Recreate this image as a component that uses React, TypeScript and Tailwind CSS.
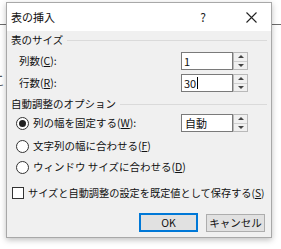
import React from "react";

const font = { fontFamily: '"Meiryo UI", "Noto Sans CJK JP", "Noto Sans", sans-serif' };

function Spinner() {
    return (
        <div className="w-[15px] h-full border border-[#b9b9b9] bg-[#f0f0f0] flex flex-col">
            <div className="flex-1 flex items-center justify-center border-b border-[#cfcfcf]">
                <div className="w-0 h-0 border-l-[3px] border-r-[3px] border-b-[3px] border-l-transparent border-r-transparent border-b-[#444]" />
            </div>
            <div className="flex-1 flex items-center justify-center">
                <div className="w-0 h-0 border-l-[3px] border-r-[3px] border-t-[3px] border-l-transparent border-r-transparent border-t-[#444]" />
            </div>
        </div>
    );
}

function NumberField({ value, caret }: { value: string; caret?: boolean }) {
    return (
        <div className="flex h-[18px] ml-auto">
            <div className="w-[52px] h-full bg-white border border-[#7a7a7a] flex items-center pl-[2px] text-[11px] text-[#111]">
                {value}
                {caret && <span className="inline-block w-px h-[12px] bg-black ml-px" />}
            </div>
            <Spinner />
        </div>
    );
}

function Radio({ checked }: { checked?: boolean }) {
    return (
        <div className="w-[13px] h-[13px] rounded-full border border-[#333] bg-white flex items-center justify-center shrink-0">
            {checked && <div className="w-[7px] h-[7px] rounded-full bg-[#222]" />}
        </div>
    );
}

function GroupHeader({ label }: { label: string }) {
    return (
        <div className="flex items-center h-[18px] gap-[4px]">
            <span className="text-[10.5px] text-[#111] whitespace-nowrap">{label}</span>
            <div className="flex-1 h-px bg-[#dadada]" />
        </div>
    );
}

export default function App() {
    return (
        <div className="relative w-[281px] h-[249px] bg-white overflow-hidden" style={font}>
            {/* document behind the dialog */}
            <div className="absolute left-0 right-0 top-[24px] h-px bg-[#6b6b6b]" />
            <span className="absolute left-[-8px] top-[70px] text-[13px] text-[#555]">こ</span>

            <div className="absolute left-[6px] top-[2px] w-[266px] h-[236px] border border-[#a8a8a8] bg-[#f0f0f0] shadow-[0_2px_6px_rgba(0,0,0,0.25)] flex flex-col">
                {/* title bar */}
                <div className="h-[28px] bg-white flex items-center pl-[4px] shrink-0">
                    <span className="text-[11px] text-[#111]">表の挿入</span>
                    <span className="ml-auto mr-[40px] text-[12px] text-[#222]">?</span>
                    <svg width="11" height="11" viewBox="0 0 11 11" className="mr-[14px]">
                        <path d="M0.5 0.5 L10.5 10.5 M10.5 0.5 L0.5 10.5" stroke="#222" strokeWidth="1.1" fill="none" />
                    </svg>
                </div>

                {/* body */}
                <div className="flex-1 flex flex-col px-[4px] text-[10.5px] text-[#111]">
                    <GroupHeader label="表のサイズ" />

                    <div className="flex items-center mt-[3px] pl-[8px] pr-[19px]">
                        <span>列数(<span className="underline">C</span>):</span>
                        <NumberField value="1" />
                    </div>
                    <div className="flex items-center mt-[4px] pl-[8px] pr-[19px]">
                        <span>行数(<span className="underline">R</span>):</span>
                        <NumberField value="30" caret />
                    </div>

                    <div className="mt-[3px]">
                        <GroupHeader label="自動調整のオプション" />
                    </div>

                    <div className="flex items-center mt-[1px] pl-[5px] pr-[19px] h-[18px]">
                        <Radio checked />
                        <span className="ml-[4px]">列の幅を固定する(<span className="underline">W</span>):</span>
                        <div className="flex h-[18px] ml-auto">
                            <div className="w-[52px] h-full bg-white border border-[#7a7a7a] flex items-center pl-[3px] text-[11px]">自動</div>
                            <Spinner />
                        </div>
                    </div>
                    <div className="flex items-center mt-[4px] pl-[5px] h-[20px]">
                        <Radio />
                        <span className="ml-[4px]">文字列の幅に合わせる(<span className="underline">F</span>)</span>
                    </div>
                    <div className="flex items-center mt-[1px] pl-[5px] h-[20px]">
                        <Radio />
                        <span className="ml-[4px]">ウィンドウ サイズに合わせる(<span className="underline">D</span>)</span>
                    </div>

                    <div className="flex items-center mt-[6px] pl-[1px] h-[20px]">
                        <div className="w-[12px] h-[12px] border border-[#333] bg-white shrink-0" />
                        <span className="ml-[4px] text-[10.2px] whitespace-nowrap">サイズと自動調整の設定を既定値として保存する(<span className="underline">S</span>)</span>
                    </div>

                    <div className="flex justify-end gap-[8px] mt-[10px] pr-[2px]">
                        <button className="w-[59px] h-[19px] bg-[#e1e1e1] border-2 border-[#0078d7] text-[10.5px] flex items-center justify-center">OK</button>
                        <button className="w-[59px] h-[18px] mt-px bg-[#e1e1e1] border border-[#adadad] text-[10.5px] flex items-center justify-center">キャンセル</button>
                    </div>
                </div>
            </div>
        </div>
    );
}
